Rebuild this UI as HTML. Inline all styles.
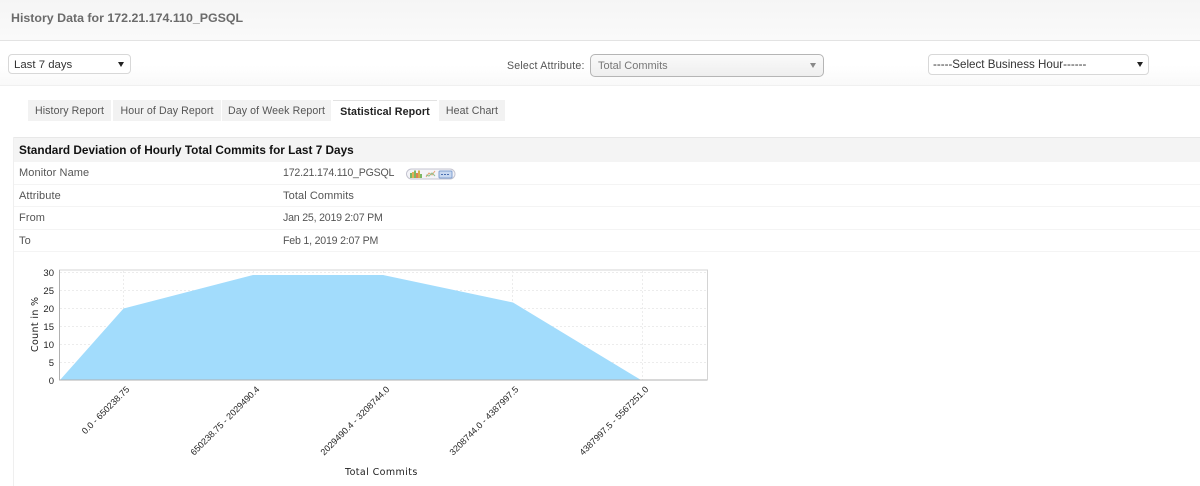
<!DOCTYPE html>
<html><head><meta charset="utf-8"><style>
html,body{margin:0;padding:0;background:#fff}
body{width:1200px;height:486px;position:relative;overflow:hidden;font-family:"Liberation Sans",sans-serif;color:#555}
.a{position:absolute;white-space:nowrap}
.sel{position:absolute;box-sizing:border-box;background:#fff;border:1px solid #d8d8d8;border-radius:4px;font-family:"Liberation Sans",sans-serif;color:#333;font-size:12px;line-height:17px;padding-left:5px}
.arr{position:absolute;width:0;height:0;border-left:3px solid transparent;border-right:3px solid transparent;border-top:5px solid #222}
.tab{position:absolute;top:100px;height:21px;background:#f2f2f2;font-size:10.6px;line-height:22px;text-align:center;color:#555;white-space:nowrap;letter-spacing:.1px}
.row{position:absolute;left:14px;right:0;height:1px;background:#f4f4f4}
.t{font-size:11px;color:#555;line-height:14px;letter-spacing:.1px}
.n{font-size:10.6px;letter-spacing:-.2px}
.b{filter:blur(.3px)}
</style></head><body>
<div class="a" style="left:0;top:0;width:1200px;height:40px;background:linear-gradient(#f5f5f5,#fafafa);border-bottom:1px solid #e3e3e3"></div>
<div class="a b" style="left:11px;top:10px;font-size:12.4px;font-weight:bold;color:#6b6b6b;line-height:16px">History Data for 172.21.174.110_PGSQL</div>
<div class="a" style="left:0;top:41px;width:1200px;height:44px;background:linear-gradient(#fff 55%,#f9f9f9);border-bottom:1px solid #f0f0f0"></div>

<div class="sel b" style="left:8px;top:54px;width:123px;height:20px;font-size:11.4px;line-height:20px">Last 7 days<div class="arr" style="left:109px;top:7px"></div></div>
<div class="a t b" style="left:507px;top:59px;color:#555;font-size:10.6px;letter-spacing:.2px">Select Attribute:</div>
<div class="sel b" style="left:590px;top:54px;width:234px;height:23px;border:1px solid #b5b5b5;border-radius:5px;background:linear-gradient(#fafafa,#eee);font-size:11px;color:#777;line-height:22px;padding-left:7px">Total Commits<div class="arr" style="left:219px;top:8px;border-top-color:#888"></div></div>
<div class="sel b" style="left:928px;top:54px;width:221px;height:21px;font-size:11.6px;line-height:20px;padding-left:4px">-----Select Business Hour------<div class="arr" style="left:208px;top:7px"></div></div>

<div class="tab b" style="left:28px;width:83px">History Report</div>
<div class="tab b" style="left:113px;width:108px">Hour of Day Report</div>
<div class="tab b" style="left:222px;width:109px">Day of Week Report</div>
<div class="tab b" style="left:333px;width:104px;height:22px;line-height:23px;background:#fff;border-top:1px solid #e2e2e2;box-sizing:border-box;font-weight:bold;color:#222;font-size:10.7px">Statistical Report</div>
<div class="tab b" style="left:439px;width:66px">Heat Chart</div>

<div class="a" style="left:13px;top:137px;width:1187px;height:25px;background:#f4f4f4;border-top:1px solid #e8e8e8;box-sizing:border-box"></div>
<div class="a" style="left:13px;top:137px;width:1px;height:349px;background:#efefef"></div>
<div class="a b" style="left:19px;top:143px;font-size:11.8px;font-weight:bold;color:#111;line-height:15px">Standard Deviation of Hourly Total Commits for Last 7 Days</div>

<div class="a t b" style="left:19px;top:166px">Monitor Name</div>
<div class="a t n b" style="left:283px;top:166px">172.21.174.110_PGSQL</div>
<div class="a t b" style="left:19px;top:189px">Attribute</div>
<div class="a t b" style="left:283px;top:189px">Total Commits</div>
<div class="a t b" style="left:19px;top:211px">From</div>
<div class="a t n b" style="left:283px;top:211px">Jan 25, 2019 2:07 PM</div>
<div class="a t b" style="left:19px;top:234px">To</div>
<div class="a t n b" style="left:283px;top:234px">Feb 1, 2019 2:07 PM</div>
<div class="row" style="top:184px"></div>
<div class="row" style="top:206px"></div>
<div class="row" style="top:229px"></div>
<div class="row" style="top:251px"></div>

<svg class="a b" style="left:406px;top:168px" width="50" height="12" viewBox="0 0 50 12">
<rect x="0.5" y="1" width="48.500" height="10" rx="5" fill="#f4f4f8" stroke="#c4c4d0"/>
<path d="M5 5v5" stroke="#5fa83f" stroke-width="1.600"/><path d="M7 4v6" stroke="#e0a030" stroke-width="1.600"/><path d="M9 2.500v7.500" stroke="#5fa83f" stroke-width="1.600"/><path d="M11 5v5" stroke="#d9662b" stroke-width="1.600"/><path d="M13 2.500v7.500" stroke="#c9a020" stroke-width="1.600"/><path d="M15 6v4" stroke="#5fa83f" stroke-width="1.600"/>
<path d="M20 9l3-4 3 2 3-4" fill="none" stroke="#e8a070" stroke-width="1"/><path d="M20 7l3 1 3-3 3 3" fill="none" stroke="#8fc08f" stroke-width="1"/>
<rect x="33" y="3" width="13" height="7" rx="1" fill="#c8d8f0" stroke="#7f9fd0"/><path d="M35 6.500h9" stroke="#4a6fb0" stroke-width="1" stroke-dasharray="2 1"/>
</svg>

<svg class="a b" style="left:0;top:260px" width="720" height="226" viewBox="0 260 720 226" font-family="'Liberation Sans',sans-serif">
<rect x="59.500" y="270" width="648" height="110" fill="#fff" stroke="#d4d4d4"/>
<path d="M60 272.500H707M60 290.500H707M60 308.500H707M60 326.500H707M60 344.500H707M60 362.500H707M123.500 271V380M253.500 271V380M383.500 271V380M512.500 271V380M642.500 271V380" stroke="#ececec" stroke-dasharray="2 2" fill="none"/>
<polygon points="60,380 123.500,308.500 253,275 383,275 513,302.500 641,380" fill="#a2dcfc"/>
<path d="M59.500 270V380H707" fill="none" stroke="#b0b0b0"/>
<g font-size="9.500" fill="#222" text-anchor="end">
<text x="54" y="276">30</text><text x="54" y="294">25</text><text x="54" y="312">20</text><text x="54" y="330">15</text><text x="54" y="348">10</text><text x="54" y="366">5</text><text x="54" y="384">0</text>
</g>
<text transform="translate(38,352) rotate(-90)" font-size="9.500" fill="#222" font-family="'DejaVu Sans',sans-serif" letter-spacing=".35">Count in %</text>
<g font-size="9" fill="#222" text-anchor="end">
<text transform="translate(130,390) rotate(-45)">0.0 - 650238.75</text>
<text transform="translate(260,390) rotate(-45)">650238.75 - 2029490.4</text>
<text transform="translate(390,390) rotate(-45)">2029490.4 - 3208744.0</text>
<text transform="translate(519,390) rotate(-45)">3208744.0 - 4387997.5</text>
<text transform="translate(649,390) rotate(-45)">4387997.5 - 5567251.0</text>
</g>
<text x="345" y="475" font-size="9.500" fill="#222" font-family="'DejaVu Sans',sans-serif" letter-spacing=".4">Total Commits</text>
</svg>
</body></html>
